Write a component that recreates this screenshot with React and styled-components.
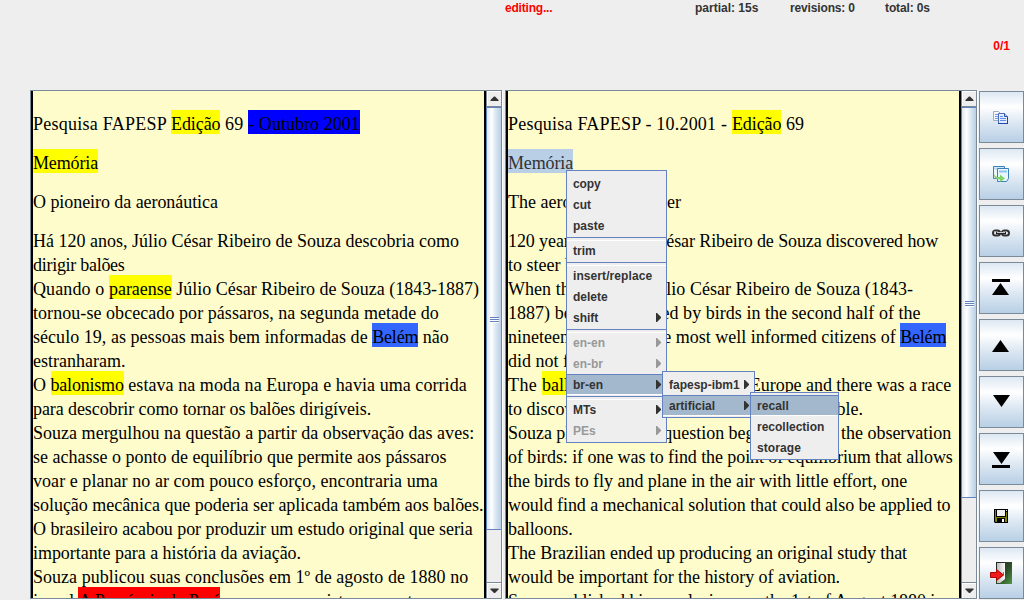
import React from "react";
import styled, { createGlobalStyle, css } from "styled-components";

const Global = createGlobalStyle`
  * { box-sizing: border-box; }
  html, body { margin: 0; padding: 0; }
  body { width: 1024px; height: 600px; overflow: hidden; background: #eeeeee; }
`;

const Window = styled.div`
  position: relative;
  display: flex;
  flex-direction: column;
  width: 1024px;
  height: 600px;
  overflow: hidden;
  background: #eeeeee;
  color: #333333;
  font: bold 12px/14px "Liberation Sans", Arial, sans-serif;
`;

const StatusBar = styled.header`
  display: flex;
  height: 36px;
  padding: 1px 0 0 505px;
`;

const Status = styled.span`
  width: ${(p) => p.$width}px;
  color: ${(p) => (p.$alert ? "#ff0000" : "#333333")};
  letter-spacing: ${(p) => p.$track || 0}px;
  white-space: nowrap;
`;

const CounterRow = styled.div`
  display: flex;
  justify-content: flex-end;
  height: 54px;
  padding: 3px 14px 0 0;
  color: #ff0000;
`;

const Workspace = styled.main`
  display: flex;
  height: 510px;
  padding-left: 30px;
`;

const Pane = styled.section`
  display: flex;
  width: 472px;
  height: 509px;
  margin-right: 3px;
  border: 1px solid #7a8a99;
  box-shadow: 1px 1px 0 #ffffff;
`;

const Page = styled.article`
  width: 455px;
  height: 507px;
  overflow: hidden;
  padding-top: 19px;
  border: solid #000000;
  border-width: 0 2px;
  background: #fffccc;
  color: #000000;
  font: 18px/28px "Liberation Serif", "Times New Roman", serif;
`;

const Line = styled.p`
  height: 24px;
  margin: 0 0 ${(p) => (p.$gap ? 15 : 0)}px;
  white-space: pre;
`;

const markColors = { yellow: "#ffff00", blue: "#0000ff", link: "#3366ff", red: "#ff0000", select: "#b8cfe5" };

const Mark = styled.span`
  display: inline-block;
  height: 24px;
  vertical-align: top;
  letter-spacing: ${(p) => p.$track || 0}px;
  background: ${(p) => markColors[p.$tone]};
  color: ${(p) => (p.$tone === "select" ? "#333333" : "#000000")};
`;

const Track = styled.div`
  display: flex;
  flex-direction: column;
  width: 15px;
  height: 507px;
  border-left: 1px solid #7a8a99;
  background: #eeeeee;
`;

const Step = styled.div`
  display: flex;
  align-items: center;
  justify-content: center;
  height: 16px;
  border: solid #7a8a99;
  border-width: ${(p) => (p.$down ? "1px 0 0" : "0 0 1px")};
  box-shadow: inset 1px 1px 0 #ffffff;
`;

const Thumb = styled.div`
  display: flex;
  align-items: center;
  justify-content: center;
  height: ${(p) => p.$height}px;
  margin-left: -1px;
  padding-top: 2px;
  border: 1px solid #6382bf;
  border-right: 0;
  background: linear-gradient(90deg, #dde8f3 0, #ffffff 33%, #dde8f3 60%, #b8cfe5 100%);
`;

const Grip = styled.div`
  width: 9px;
  height: 6px;
  background: repeating-linear-gradient(#6382bf 0 1px, #ffffff 1px 2px);
`;

const Filler = styled.div`
  flex: 1;
`;

const Tools = styled.nav`
  display: flex;
  flex-direction: column;
  gap: 5px;
  padding-top: 1px;
  margin-left: -1px;
`;

const ToolButton = styled.button`
  display: flex;
  align-items: center;
  justify-content: center;
  flex: none;
  width: 45px;
  height: 52px;
  padding: 0 1px 0 0;
  border: 1px solid #7a8a99;
  background: linear-gradient(#dde8f3 0, #ffffff 30%, #dde8f3 60%, #b8cfe5 100%);
`;

const Popup = styled.div`
  position: absolute;
  left: ${(p) => p.$x}px;
  top: ${(p) => p.$y}px;
  width: ${(p) => p.$width}px;
  padding: 2px 0 1px;
  border: 1px solid #6382bf;
  background: #eeeeee;
`;

const Item = styled.div`
  display: flex;
  align-items: center;
  justify-content: space-between;
  height: 21px;
  padding: 0 5px 0 6px;
  color: ${(p) => (p.$disabled ? "#999999" : "#333333")};
  letter-spacing: ${(p) => p.$track || 0}px;
  white-space: nowrap;
  ${(p) =>
    p.$active &&
    css`
      background: #a3b8cc;
      box-shadow: inset 0 1px 0 #6382bf, inset 0 -1px 0 #ffffff;
    `}
`;

const Separator = styled.div`
  height: 4px;
  padding-top: 1px;
  &::before {
    content: "";
    display: block;
    height: 2px;
    border-top: 1px solid #6382bf;
    border-bottom: 1px solid #ffffff;
  }
`;

const Arrow = () => (
  <svg width="5" height="9" viewBox="0 0 5 9">
    <path d="M0 0h1l4 4v1l-4 4H0z" fill="currentColor" />
  </svg>
);

const StepArrow = ({ down }) => (
  <svg width="9" height="5" viewBox="0 0 9 5">
    <path d={down ? "M0.500 0.500h8v1l-3.500 3.500H4L.5 1.500z" : "M.5 5h8V4L5 .5H4L.5 4z"} fill="#333333" />
  </svg>
);

const CopyIcon = () => (
  <svg width="16" height="16" viewBox="1 0 16 16">
    <path d="M1.500 2.500h5l2.500 2.500v6.500H1.500z" fill="#f4f7fc" stroke="#a3acc0" />
    <path d="M3 5.500h3M3 7.500h4M3 9.500h4" stroke="#6f9ae6" />
    <path d="M6.500 4.500h6l3 3v7h-9z" fill="#e3edff" stroke="#4a6cb8" />
    <path d="M12.500 4.500v3h3" fill="#b6ccf5" stroke="#2f55b0" />
    <path d="M8 7.500h3M8 9.500h6M8 11.500h6" stroke="#5f8ff0" />
    <path d="M6 14.500h10M15.500 8v7" stroke="#2346a5" />
  </svg>
);

const TransferIcon = () => (
  <svg width="18" height="18" viewBox="-1 -1 18 18">
    <path d="M.5.5h11v12H.5z" fill="#eaf5fd" stroke="#3e80b8" />
    <path d="M1 1.500h10v2H1z" fill="#b7dcf5" />
    <path d="M4.500 2.500h11v10l-2 3h-9z" fill="#e9f6ff" stroke="#3e80b8" />
    <path d="M6 4.500h8v2H6z" fill="#8fc4ee" />
    <path d="M1 8c1 2.500 2.500 3 6 3V8.500l5 4-5 3.500v-2.500C3 13.500 1 12 1 8z" fill="#83d36b" />
  </svg>
);

const ChainIcon = () => (
  <svg width="18" height="14" viewBox="0 -5 18 14" fill="none">
    <rect x="1" y="1.500" width="7" height="5" rx="2.500" stroke="#333" strokeWidth="2" />
    <rect x="10" y="1.500" width="7" height="5" rx="2.500" stroke="#333" strokeWidth="2" />
    <path d="M2 2.500h4M11 2.500h4" stroke="#999" />
    <path d="M4 4h10" stroke="#222" strokeWidth="2.500" />
    <path d="M5 3.500h8" stroke="#ccc" />
  </svg>
);

const MoveIcon = ({ down, bar }) => (
  <svg width="18" height="18" viewBox="0 0 18 18" fill="#000">
    {!bar && !down && <path d="M8.500 4l8.500 12H0z" />}
    {!bar && down && <path d="M1 2h17L9.500 14z" />}
    {bar && !down && <path d="M0 0h18v3H0zM8.500 4l8.500 12H0z" />}
    {bar && down && <path d="M1 2h17L9.500 14zM0 15h18v3H0z" />}
  </svg>
);

const SaveIcon = () => (
  <svg width="14" height="14" viewBox="0 0 14 14">
    <path d="M0 0h14v14H1L0 13z" fill="#000" />
    <path d="M1 1h1v7h10V3h1v10H1.500L1 12z" fill="#808000" />
    <path d="M3 1h8v6H3z" fill="#eeeeee" />
    <path d="M12 1h1v1h-1z" fill="#eee" />
    <path d="M3 9h8v5H3z" fill="#000" />
    <path d="M8 10h2v3H8z" fill="#fff" />
  </svg>
);

const ExitIcon = () => (
  <svg width="22" height="22" viewBox="0 0 22 22">
    <defs>
      <linearGradient id="door" x1="0" y1="0" x2="1" y2="1">
        <stop offset="0" stopColor="#222" />
        <stop offset="0.550" stopColor="#2f4f2b" />
        <stop offset="1" stopColor="#4f9a45" />
      </linearGradient>
      <linearGradient id="leaf" x1="0" y1="0" x2="1" y2="0">
        <stop offset="0" stopColor="#bdbdbd" />
        <stop offset="1" stopColor="#fafafa" />
      </linearGradient>
    </defs>
    <path d="M6 0h16v22H6z" fill="url(#door)" />
    <path d="M7 1h8v16l-5 4H7z" fill="url(#leaf)" />
    <path d="M13 10h1v3h-1z" fill="#777" />
    <path d="M.5 10.500h6v-3l7 5.500-7 5.500v-3h-6z" fill="#f01818" stroke="#a80000" />
  </svg>
);

const ScrollBar = ({ thumb }) => (
  <Track>
    <Step><StepArrow /></Step>
    <Thumb $height={thumb}><Grip /></Thumb>
    <Filler />
    <Step $down><StepArrow down /></Step>
  </Track>
);

const Run = styled.span`
  letter-spacing: ${(p) => p.$track || 0}px;
`;

// A part is [text, tracking, highlight tone].
const source = [
  { gap: true, parts: [["Pesquisa FAPESP ", 0.25], ["Edição", -0.1, "yellow"], [" 69 ", 0.2], ["- Outubro 2001", 0.05, "blue"]] },
  { gap: true, parts: [["Memória", -0.14, "yellow"]] },
  { gap: true, parts: [["O pioneiro da aeronáutica", -0.06]] },
  { parts: [["Há 120 anos, Júlio César Ribeiro de Souza descobria como", 0]] },
  { parts: [["dirigir balões", -0.28]] },
  { parts: [["Quando o ", 0.1], ["paraense", 0, "yellow"], [" Júlio César Ribeiro de Souza (1843-1887)", -0.02]] },
  { parts: [["tornou-se obcecado por pássaros, na segunda metade do", 0.057]] },
  { parts: [["século 19, as pessoas mais bem informadas de ", 0.04], ["Belém", -0.2, "link"], [" não", 0]] },
  { parts: [["estranharam.", 0]] },
  { parts: [["O ", 0], ["balonismo", -0.2, "yellow"], [" estava na moda na Europa e havia uma corrida", 0.06]] },
  { parts: [["para descobrir como tornar os balões dirigíveis.", -0.09]] },
  { parts: [["Souza mergulhou na questão a partir da observação das aves:", 0.02]] },
  { parts: [["se achasse o ponto de equilíbrio que permite aos pássaros", 0]] },
  { parts: [["voar e planar no ar com pouco esforço, encontraria uma", 0.055]] },
  { parts: [["solução mecânica que poderia ser aplicada também aos balões.", -0.03]] },
  { parts: [["O brasileiro acabou por produzir um estudo original que seria", -0.06]] },
  { parts: [["importante para a história da aviação.", -0.05]] },
  { parts: [["Souza publicou suas conclusões em 1º de agosto de 1880 no", 0.03]] },
  { parts: [["jornal ", -0.15], ["A Província do Pará", -0.15, "red"], [", e em uma revista, somente", 0]] },
];

const target = [
  { gap: true, parts: [["Pesquisa FAPESP - 10.2001 - ", 0.21], ["Edição", -0.08, "yellow"], [" 69", 0]] },
  { gap: true, parts: [["Memória", -0.14, "select"]] },
  { gap: true, parts: [["The aeronautics pioneer", 0]] },
  { parts: [["120 years ago, Júlio César Ribeiro de Souza discovered how", -0.1]] },
  { parts: [["to steer balloons.", 0]] },
  { parts: [["When the paraense Júlio César Ribeiro de Souza (1843-", 0.04]] },
  { parts: [["1887) became obsessed by birds in the second half of the", 0.03]] },
  { parts: [["nineteenth century, the most well informed citizens of ", 0], ["Belém", -0.2, "link"]] },
  { parts: [["did not find it strange.", 0]] },
  { parts: [["The ", 0.4], ["ballooning", 0, "yellow"], [" was in fashion in Europe and there was a race", -0.04]] },
  { parts: [["to discover how to render the balloons navigable.", 0]] },
  { parts: [["Souza plunged in the question beginning with the observation", -0.03]] },
  { parts: [["of birds: if one was to find the point of equilibrium that allows", -0.08]] },
  { parts: [["the birds to fly and plane in the air with little effort, one", -0.03]] },
  { parts: [["would find a mechanical solution that could also be applied to", -0.07]] },
  { parts: [["balloons.", -0.1]] },
  { parts: [["The Brazilian ended up producing an original study that", -0.07]] },
  { parts: [["would be important for the history of aviation.", -0.04]] },
  { parts: [["Souza published his conclusions on the 1st of August 1880 in", -0.1]] },
];

const Document = ({ lines, thumb }) => (
  <Pane>
    <Page>
      {lines.map((line, i) => (
        <Line key={i} $gap={line.gap}>
          {line.parts.map(([text, track, tone], j) =>
            tone ? (
              <Mark key={j} $tone={tone} $track={track}>{text}</Mark>
            ) : (
              <Run key={j} $track={track}>{text}</Run>
            )
          )}
        </Line>
      ))}
    </Page>
    <ScrollBar thumb={thumb} />
  </Pane>
);

const tools = [
  ["Copy", <CopyIcon />],
  ["Transfer", <TransferIcon />],
  ["Link", <ChainIcon />],
  ["First", <MoveIcon bar />],
  ["Previous", <MoveIcon />],
  ["Next", <MoveIcon down />],
  ["Last", <MoveIcon down bar />],
  ["Save", <SaveIcon />],
  ["Exit", <ExitIcon />],
];

export default function App() {
  return (
    <Window>
      <Global />
      <StatusBar>
        <Status $width={190} $alert $track={-0.2}>editing...</Status>
        <Status $width={95}>partial: 15s</Status>
        <Status $width={95} $track={-0.15}>revisions: 0</Status>
        <Status $track={-0.12}>total: 0s</Status>
      </StatusBar>
      <CounterRow>0/1</CounterRow>
      <Workspace>
        <Document lines={source} thumb={423} />
        <Document lines={target} thumb={391} />
        <Tools>
          {tools.map(([name, icon]) => (
            <ToolButton key={name} aria-label={name}>{icon}</ToolButton>
          ))}
        </Tools>
      </Workspace>
      <Popup $x={566} $y={170} $width={101}>
        <Item $track={-0.1}>copy</Item>
        <Item>cut</Item>
        <Item>paste</Item>
        <Separator />
        <Item>trim</Item>
        <Separator />
        <Item $track={0.08}>insert/replace</Item>
        <Item>delete</Item>
        <Item>shift<Arrow /></Item>
        <Separator />
        <Item $disabled>en-en<Arrow /></Item>
        <Item $disabled>en-br<Arrow /></Item>
        <Item $active>br-en<Arrow /></Item>
        <Separator />
        <Item>MTs<Arrow /></Item>
        <Item $disabled>PEs<Arrow /></Item>
      </Popup>
      <Popup $x={662} $y={371} $width={93}>
        <Item>fapesp-ibm1<Arrow /></Item>
        <Item $active>artificial<Arrow /></Item>
      </Popup>
      <Popup $x={750} $y={392} $width={89}>
        <Item $active $track={0.1}>recall</Item>
        <Item>recollection</Item>
        <Item $track={0.1}>storage</Item>
      </Popup>
    </Window>
  );
}
